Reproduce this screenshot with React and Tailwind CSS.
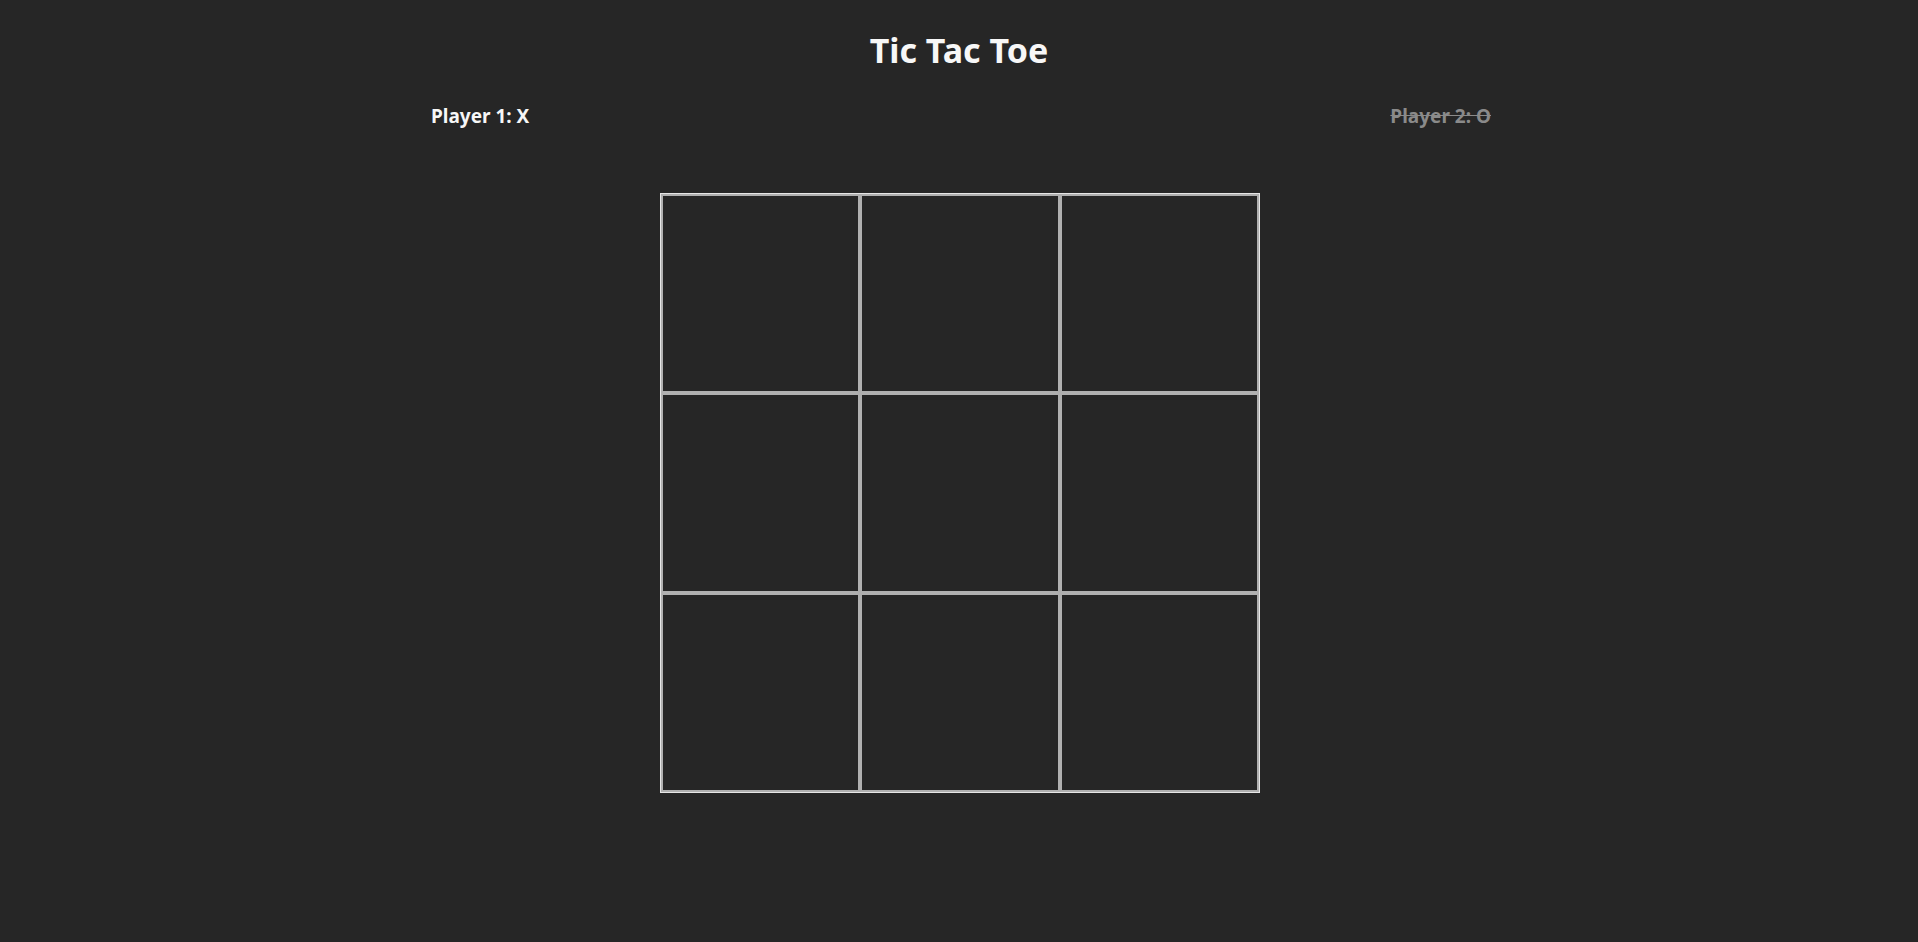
export default function App() {
  const cells = Array.from({ length: 9 });
  return (
    <div
      className="min-h-[942px] w-full bg-[#262626] flex flex-col items-center"
      style={{ fontFamily: '"Noto Sans", "Open Sans", sans-serif' }}
    >
      <h1 className="mt-[30px] text-[34px] leading-[40px] font-bold text-[#f7f7f7]">
        Tic Tac Toe
      </h1>
      <div className="mt-[32px] w-[1060px] ml-[4px] flex justify-between">
        <span className="text-[19px] leading-[28px] font-bold text-[#f7f7f7]">Player 1: X</span>
        <span className="text-[19px] leading-[28px] font-bold text-[#8a8a8a] line-through">
          Player 2: O
        </span>
      </div>
      <div className="mt-[63px] ml-[2px] w-[600px] h-[600px] border border-[#e6e6e6] grid grid-cols-3 grid-rows-3">
        {cells.map((_, i) => (
          <div key={i} className="border-2 border-[#b0b0b0] bg-[#262626]" />
        ))}
      </div>
    </div>
  );
}
